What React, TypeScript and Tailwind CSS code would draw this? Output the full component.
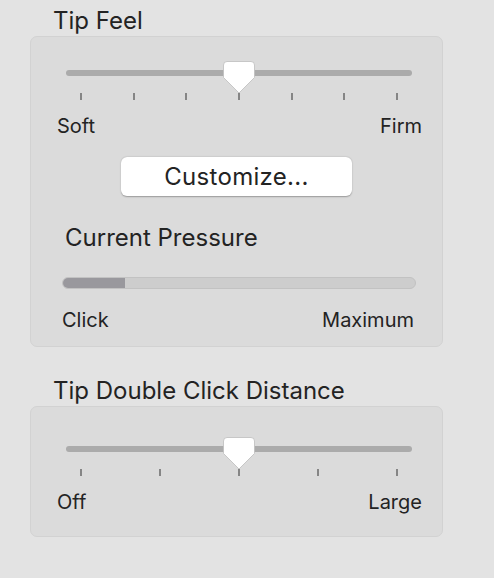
import React from 'react'

const font = { fontFamily: 'Inter, "Noto Sans", sans-serif' }

function Knob() {
  return (
    <svg width="34" height="34" viewBox="0 0 34 34" className="absolute top-[-1px] left-1/2 -translate-x-1/2">
      <path
        d="M5 1.5 H29 Q32.5 1.5 32.5 5 V17.5 L17 33 L1.5 17.5 V5 Q1.5 1.5 5 1.5 Z"
        fill="#ffffff"
        stroke="#bdbdbd"
        strokeWidth="0.8"
      />
    </svg>
  )
}

function Slider({ ticks }: { ticks: number }) {
  return (
    <div className="pl-[35px] pr-[30px]">
      <div className="relative h-[39px] pt-[9px]">
        <div className="h-[6px] rounded-full bg-[#ababab]" />
        <Knob />
        <div className="mt-[17px] flex justify-between px-[14px]">
          {Array.from({ length: ticks }).map((_, i) => (
            <div key={i} className="h-[7px] w-[2px] bg-[#858585]" />
          ))}
        </div>
      </div>
    </div>
  )
}

export default function App() {
  return (
    <div className="w-[494px] h-[578px] bg-[#e3e3e3] pl-[30px] pt-[7px] text-[#232323]" style={font}>
      <div className="pl-[23px] text-[24px] leading-[28px] mb-[1px]">Tip Feel</div>
      <div className="w-[413px] rounded-[7px] bg-[#dbdbdb] border border-[#d2d2d2] pt-[24px] pb-[14px]">
        <Slider ticks={7} />
        <div className="mt-[14px] flex justify-between pl-[26px] pr-[20px] text-[20px] leading-[24px]">
          <span>Soft</span>
          <span>Firm</span>
        </div>
        <button className="mt-[19px] mx-auto block w-[231px] h-[39px] rounded-[6px] bg-white shadow-[0_0.5px_1.5px_rgba(0,0,0,0.3)] text-[24px] leading-[28px] tracking-[0.3px]">
          Customize...
        </button>
        <div className="mt-[28px] pl-[34px] text-[24px] leading-[28px]">Current Pressure</div>
        <div className="mt-[25px] ml-[31px] w-[354px] h-[12px] rounded-full bg-[#cdcdcd] border border-[#c2c2c2] overflow-hidden">
          <div className="h-full w-[62px] bg-[#99989d]" />
        </div>
        <div className="mt-[19px] flex justify-between pl-[31px] pr-[28px] text-[20px] leading-[24px]">
          <span>Click</span>
          <span>Maximum</span>
        </div>
      </div>

      <div className="mt-[30px] pl-[23px] text-[24px] leading-[28px] mb-[1px]">Tip Double Click Distance</div>
      <div className="w-[413px] rounded-[7px] bg-[#dbdbdb] border border-[#d2d2d2] pt-[30px] pb-[22px]">
        <Slider ticks={5} />
        <div className="mt-[14px] flex justify-between pl-[26px] pr-[20px] text-[20px] leading-[24px]">
          <span>Off</span>
          <span>Large</span>
        </div>
      </div>
    </div>
  )
}
